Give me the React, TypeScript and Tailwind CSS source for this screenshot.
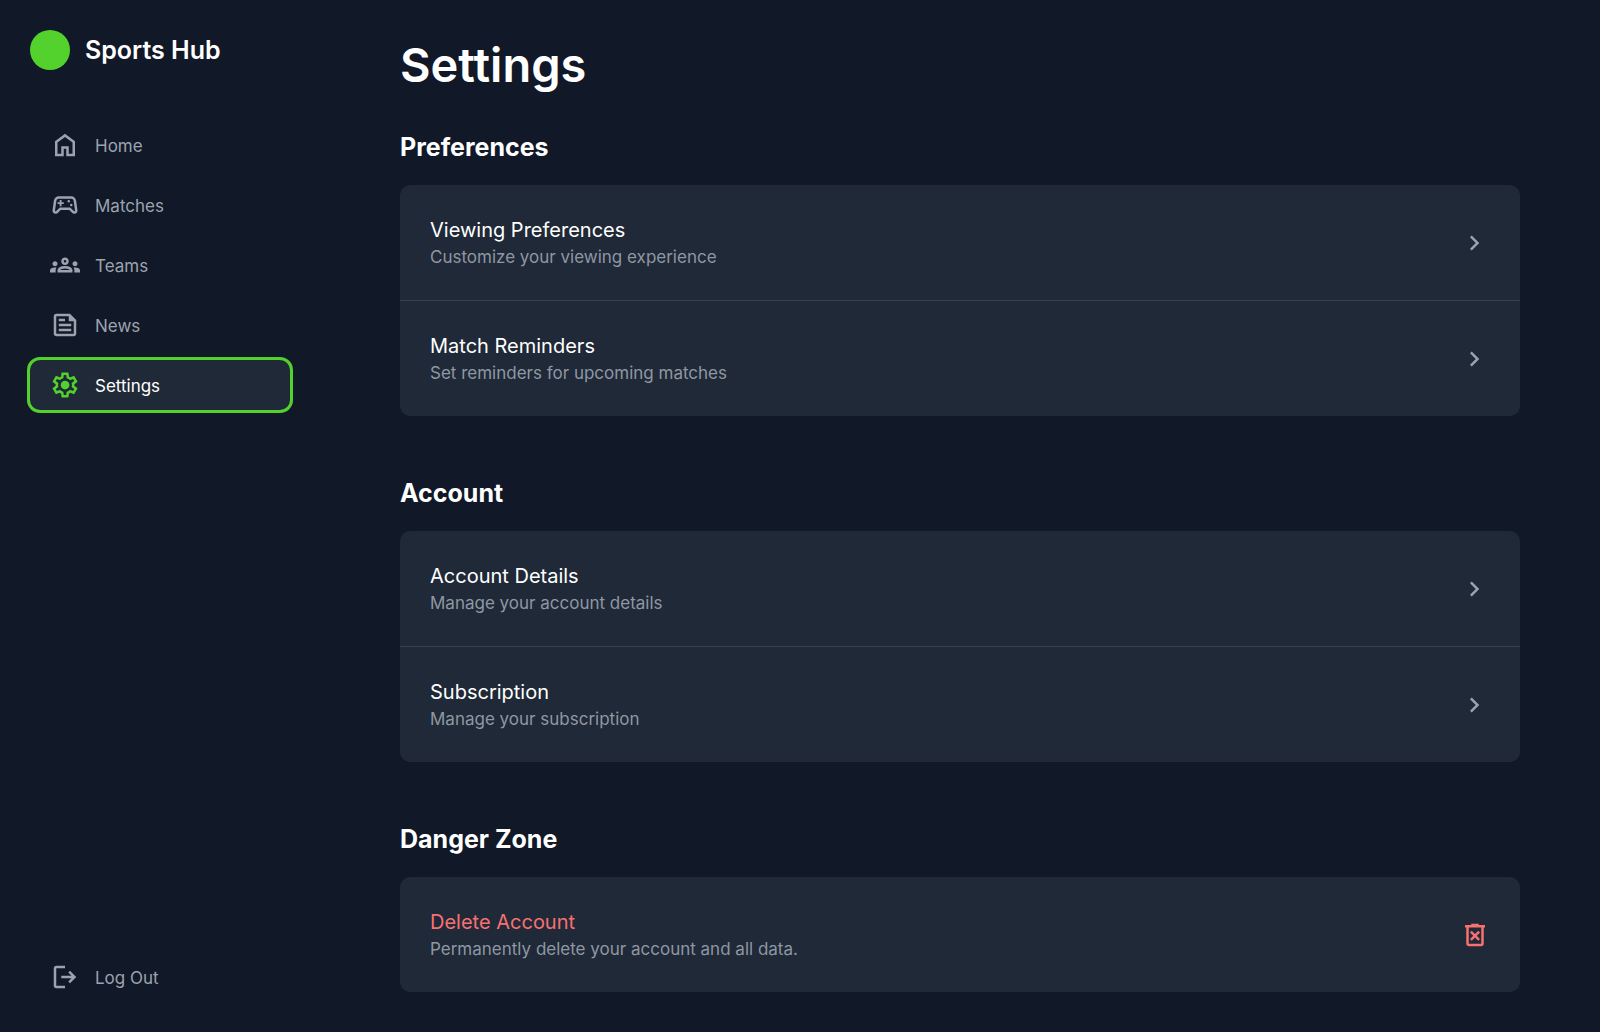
import React from "react";

const ICONS = {
  home: "M240-200h120v-240h240v240h120v-360L480-740 240-560v360Zm-80 80v-480l320-240 320 240v480H520v-240h-80v240H160Z",
  matches:
    "M182-200q-51 0-79-35.5T82-322l42-300q9-60 53.5-99T282-760h396q60 0 104.5 39t53.5 99l42 300q7 51-21 86.5T778-200q-21 0-39-7.5T706-230l-90-90H344l-90 90q-15 15-33 22.5t-39 7.5Zm16-86 114-114h336l114 114q2 2 16 6 11 0 17.5-6.5T800-304l-44-308q-4-29-26-48.5T678-680H282q-30 0-52 19.5T204-612l-44 308q-2 11 4.5 17.5T182-280q2 0 16-6Zm482-154q17 0 28.5-11.5T720-480q0-17-11.5-28.5T680-520q-17 0-28.5 11.5T640-480q0 17 11.5 28.5T680-440Zm-80-120q17 0 28.5-11.5T640-600q0-17-11.5-28.5T600-640q-17 0-28.5 11.5T560-600q0 17 11.5 28.5T600-560ZM310-440h60v-70h70v-60h-70v-70h-60v70h-70v60h70v70Z",
  teams:
    "M0-240v-63q0-43 44-70t116-27q13 0 25 .5t23 2.5q-14 21-21 44t-7 48v65H0Zm240 0v-65q0-32 17.5-58.5T307-410q32-20 76.5-30t96.5-10q53 0 97.5 10t76.5 30q32 20 49 46.5t17 58.5v65H240Zm540 0v-65q0-26-6.5-49T754-397q11-2 22.5-2.5t23.5-.5q72 0 116 26.5t44 70.5v63H780Zm-455-80h311q-10-20-55.5-35T480-370q-55 0-100.5 15T325-320ZM160-440q-33 0-56.5-23.5T80-520q0-34 23.5-57t56.5-23q34 0 57 23t23 57q0 33-23 56.5T160-440Zm640 0q-33 0-56.5-23.5T720-520q0-34 23.5-57t56.5-23q34 0 57 23t23 57q0 33-23 56.5T800-440Zm-320-40q-50 0-85-35t-35-85q0-51 35-85.5t85-34.5q51 0 85.5 34.5T600-600q0 50-34.5 85T480-480Zm0-80q17 0 28.5-11.5T520-600q0-17-11.5-28.5T480-640q-17 0-28.5 11.5T440-600q0 17 11.5 28.5T480-560Z",
  news: "M200-120q-33 0-56.5-23.5T120-200v-560q0-33 23.5-56.5T200-840h440l200 200v440q0 33-23.5 56.5T760-120H200Zm0-80h560v-400H600v-160H200v560Zm80-80h400v-80H280v80Zm0-320h200v-80H280v80Zm0 160h400v-80H280v80Z",
  settings:
    "m370-80-16-128q-13-5-24.5-12T307-235l-119 50L78-375l103-78q-1-7-1-13.5v-27q0-6.5 1-13.5L78-585l110-190 119 50q11-8 23-15t24-12l16-128h220l16 128q13 5 24.5 12t22.5 15l119-50 110 190-103 78q1 7 1 13.5v27q0 6.5-2 13.5l103 78-110 190-118-50q-11 8-23 15t-24 12L590-80H370Zm70-80h79l14-106q31-8 57.5-23.5T639-327l99 41 39-68-86-65q5-14 7-29.5t2-31.5q0-16-2-31.5t-7-29.5l86-65-39-68-99 42q-22-23-48.5-38.5T533-694l-13-106h-79l-14 106q-31 8-57.5 23.5T321-633l-99-41-39 68 86 64q-5 15-7 30t-2 32q0 16 2 31t7 30l-86 65 39 68 99-42q22 23 48.5 38.5T427-266l13 106Zm42-180q58 0 99-41t41-99q0-58-41-99t-99-41q-59 0-99.5 41T342-480q0 58 40.5 99t99.5 41Z",
  logout:
    "M200-120q-33 0-56.5-23.5T120-200v-560q0-33 23.5-56.5T200-840h280v80H200v560h280v80H200Zm440-160-55-58 102-102H360v-80h327L585-622l55-58 200 200-200 200Z",
  chevron: "M504-480 320-664l56-56 240 240-240 240-56-56 184-184Z",
  trash:
    "m376-300 104-104 104 104 56-56-104-104 104-104-56-56-104 104-104-104-56 56 104 104-104 104 56 56Zm-96 180q-33 0-56.5-23.5T200-200v-520h-40v-80h200v-40h240v40h200v80h-40v520q0 33-23.5 56.5T680-120H280Zm400-600H280v520h400v-520Z",
};

type IconName = keyof typeof ICONS;

function Icon({ name, className = "" }: { name: IconName; className?: string }) {
  return (
    <svg
      viewBox="0 -960 960 960"
      aria-hidden="true"
      fill="currentColor"
      className={`size-[30px] shrink-0 ${className}`}
    >
      <path d={ICONS[name]} />
    </svg>
  );
}

const NAV: { label: string; icon: IconName; active?: boolean }[] = [
  { label: "Home", icon: "home" },
  { label: "Matches", icon: "matches" },
  { label: "Teams", icon: "teams" },
  { label: "News", icon: "news" },
  { label: "Settings", icon: "settings", active: true },
];

function NavLink({ label, icon, active }: { label: string; icon: IconName; active?: boolean }) {
  return (
    <a
      href="#"
      aria-current={active ? "page" : undefined}
      className={`flex h-[50px] items-center gap-[15px] rounded-[10px] px-5 text-[17px] leading-[25px] ${
        active ? "bg-[#1f2937] text-white ring-3 ring-[#53d22d]" : "text-[#9ca3af]"
      }`}
    >
      <Icon name={icon} className={active ? "text-[#53d22d]" : ""} />
      <span className="pt-0.5">{label}</span>
    </a>
  );
}

type Row = { title: string; text: string; danger?: boolean };

const SECTIONS: { title: string; rows: Row[] }[] = [
  {
    title: "Preferences",
    rows: [
      { title: "Viewing Preferences", text: "Customize your viewing experience" },
      { title: "Match Reminders", text: "Set reminders for upcoming matches" },
    ],
  },
  {
    title: "Account",
    rows: [
      { title: "Account Details", text: "Manage your account details" },
      { title: "Subscription", text: "Manage your subscription" },
    ],
  },
  {
    title: "Danger Zone",
    rows: [
      {
        title: "Delete Account",
        text: "Permanently delete your account and all data.",
        danger: true,
      },
    ],
  },
];

function SettingRow({ title, text, danger }: Row) {
  return (
    <button type="button" className="flex w-full items-center justify-between gap-5 p-[30px] text-left">
      <span className="flex flex-col">
        <span
          className={`text-[20px] leading-[30px] ${danger ? "text-[#f87171]" : "text-white"}`}
        >
          {title}
        </span>
        <span className="text-[17px] leading-[25px] text-[#8f97a3]">{text}</span>
      </span>
      <Icon name={danger ? "trash" : "chevron"} className={danger ? "text-[#f87171]" : "text-[#9ca3af]"} />
    </button>
  );
}

export default function App() {
  return (
    <div className="flex min-h-screen bg-[#111827] font-['Inter',sans-serif] text-white">
      <aside className="flex w-80 shrink-0 flex-col p-[30px]">
        <div className="flex items-center gap-[15px]">
          <span className="size-10 rounded-full bg-[#53d22d]" />
          <span className="text-[25px] font-semibold leading-[35px]">Sports Hub</span>
        </div>
        <nav aria-label="Main" className="mt-[50px] flex flex-col gap-[10px]">
          {NAV.map((item) => (
            <NavLink key={item.label} {...item} />
          ))}
        </nav>
        <div className="mt-auto">
          <NavLink label="Log Out" icon="logout" />
        </div>
      </aside>
      <main className="min-w-0 flex-1 px-20 py-10">
        <h1 className="text-[47px] font-semibold leading-[50px]">Settings</h1>
        <div className="mt-10 flex flex-col gap-[60px]">
          {SECTIONS.map((section) => (
            <section key={section.title}>
              <h2 className="text-[25px] font-bold leading-[35px]">{section.title}</h2>
              <div className="mt-5 divide-y divide-[#374151] rounded-[10px] bg-[#1f2937]">
                {section.rows.map((row) => (
                  <SettingRow key={row.title} {...row} />
                ))}
              </div>
            </section>
          ))}
        </div>
      </main>
    </div>
  );
}
